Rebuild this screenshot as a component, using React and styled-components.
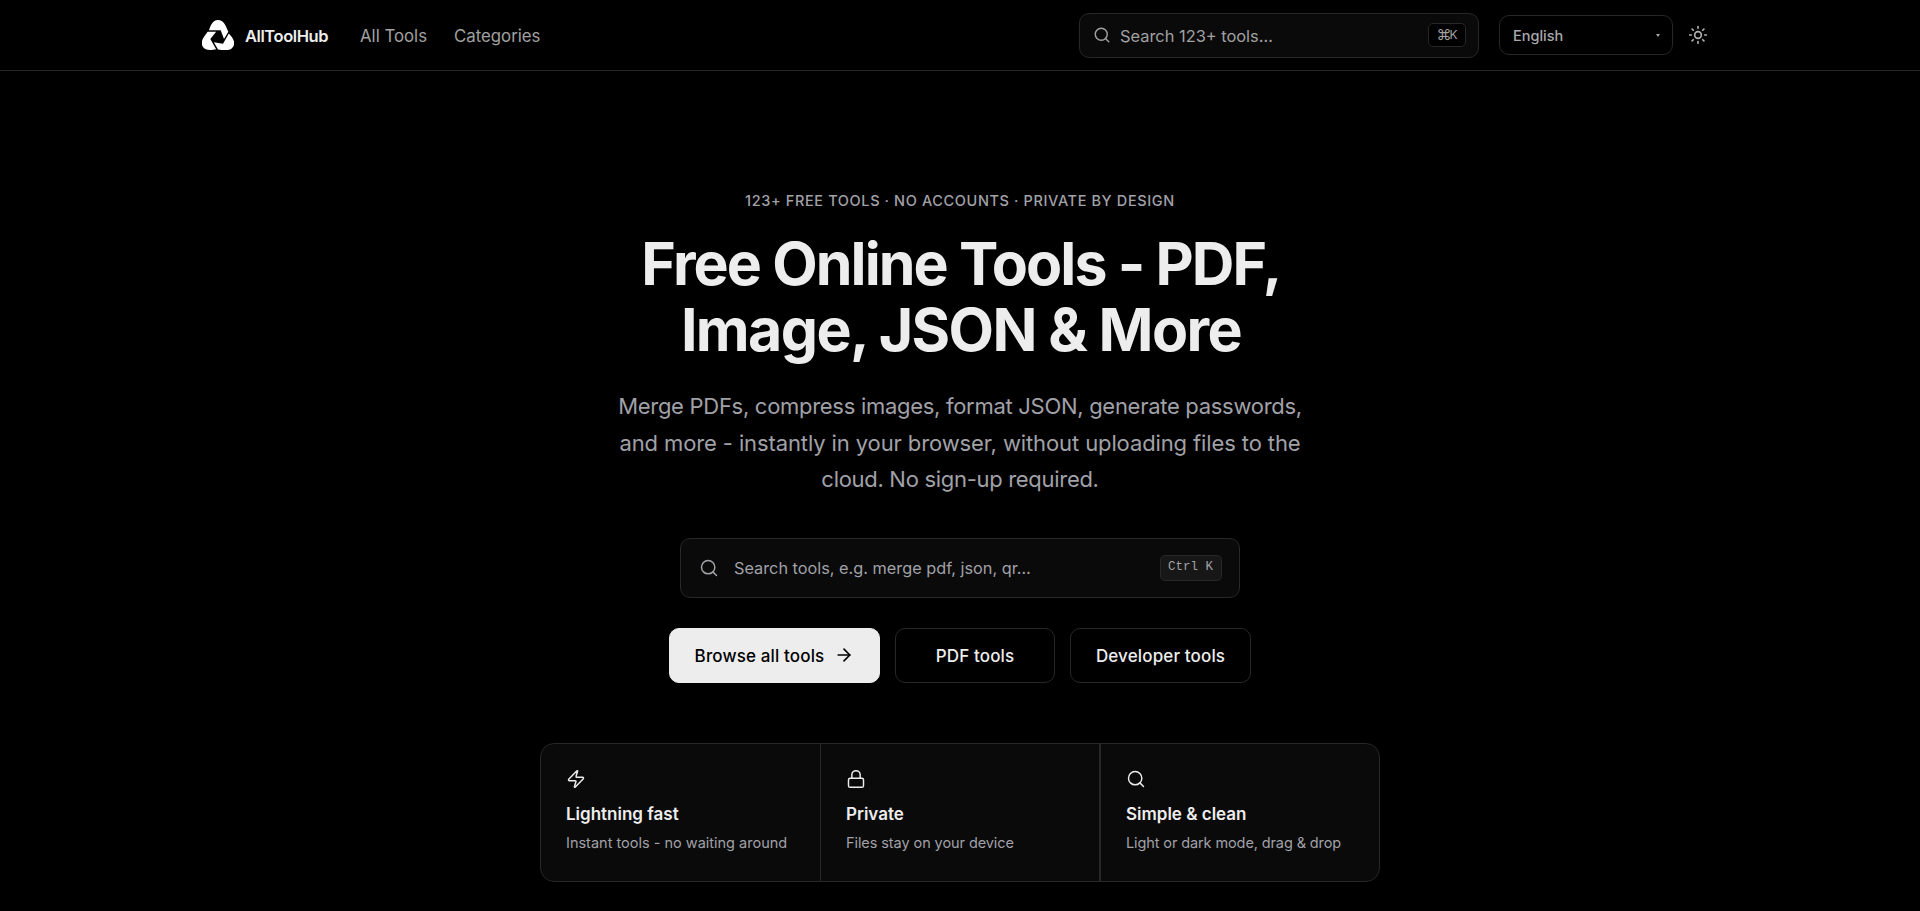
import React from 'react'
import styled, { createGlobalStyle } from 'styled-components'
import { ArrowRight, Lock, Search, Sun, Zap } from 'lucide-react'

const features = [
  {
    icon: Zap,
    title: 'Lightning fast',
    text: 'Instant tools - no waiting around',
  },
  {
    icon: Lock,
    title: 'Private',
    text: 'Files stay on your device',
    spacing: '-0.08px',
  },
  {
    icon: Search,
    title: 'Simple & clean',
    text: 'Light or dark mode, drag & drop',
    spacing: '-0.11px',
  },
]

const blade =
  'M-27 -22 C-23 -34 -17 -53 0 -53 C17 -53 23 -36 31 -18 L18 4 L8 -22 Z'

const Logo = () => (
  <LogoMark viewBox='-48 -53 96 90'>
    <path d={blade} />
    <path d={blade} transform='rotate(120)' />
    <path d={blade} transform='rotate(240)' />
  </LogoMark>
)

const Header = () => (
  <Bar>
    <Brand>
      <Logo />
      <BrandName>AllToolHub</BrandName>
    </Brand>
    <Nav>
      <NavLink>All Tools</NavLink>
      <NavLink>Categories</NavLink>
    </Nav>
    <HeaderSearch>
      <Search size={18} strokeWidth={1.9} />
      <HeaderSearchText>Search 123+ tools…</HeaderSearchText>
      <Shortcut>
        <span>⌘</span>K
      </Shortcut>
    </HeaderSearch>
    <Language>
      English
      <Caret />
    </Language>
    <ThemeButton aria-label='Toggle theme'>
      <Sun size={20} strokeWidth={2} />
    </ThemeButton>
  </Bar>
)

const App = () => {
  return (
    <>
      <GlobalStyle />
      <Header />
      <Hero>
        <Eyebrow>123+ Free tools · No accounts · Private by design</Eyebrow>
        <Title>
          <Line $spacing='-1.9px'>Free Online Tools - PDF,</Line>
          <Line $spacing='-1.6px'>Image, JSON &amp; More</Line>
        </Title>
        <Lead>
          <Line $spacing='-0.29px'>
            Merge PDFs, compress images, format JSON, generate passwords,
          </Line>
          <Line $spacing='-0.11px'>
            and more - instantly in your browser, without uploading files to the
          </Line>
          <Line $spacing='-0.3px'>cloud. No sign-up required.</Line>
        </Lead>
        <HeroSearch>
          <Search size={20} strokeWidth={1.8} />
          <HeroSearchText>Search tools, e.g. merge pdf, json, qr…</HeroSearchText>
          <KeyHint>Ctrl K</KeyHint>
        </HeroSearch>
        <Actions>
          <Button $primary $width='211px'>
            Browse all tools
            <ArrowRight size={20} strokeWidth={2} />
          </Button>
          <Button $width='160px'>PDF tools</Button>
          <Button $width='181px'>Developer tools</Button>
        </Actions>
        <Features>
          {features.map(({ icon: Icon, title, text, spacing }) => (
            <Feature key={title}>
              <Icon size={20} strokeWidth={1.75} />
              <FeatureTitle>{title}</FeatureTitle>
              <FeatureText $spacing={spacing}>{text}</FeatureText>
            </Feature>
          ))}
        </Features>
      </Hero>
    </>
  )
}

export default App

const GlobalStyle = createGlobalStyle`
  * {
    box-sizing: border-box;
  }

  body {
    margin: 0;
    height: 911px;
    overflow: hidden;
    background: #000;
    color: #ededed;
    font-family: Inter, 'Liberation Sans', sans-serif;
  }

  h1, h2, p {
    margin: 0;
  }

  svg {
    flex-shrink: 0;
  }
`

const Bar = styled.header`
  display: flex;
  align-items: center;
  height: 71px;
  padding: 0 204px 0 202px;
  border-bottom: 1px solid #272727;
`

const Brand = styled.a`
  display: flex;
  align-items: center;
  gap: 11px;
  width: 158px;
`

const LogoMark = styled.svg`
  width: 32px;
  height: 30px;
  fill: #fff;
`

const BrandName = styled.span`
  padding-top: 1px;
  font-size: 16.5px;
  font-weight: 600;
  letter-spacing: -0.43px;
`

const Nav = styled.nav`
  display: flex;
  gap: 27px;
  padding-top: 1px;
`

const NavLink = styled.a`
  font-size: 16.8px;
  color: #a1a1a1;
`

const HeaderSearch = styled.div`
  display: flex;
  align-items: center;
  width: 400px;
  height: 45px;
  margin-left: auto;
  padding: 0 12px 0 13px;
  gap: 9px;
  border: 1px solid #272727;
  border-radius: 10px;
  background: #0a0a0a;
  color: #a1a1a1;
`

const HeaderSearchText = styled.span`
  flex: 1;
  padding-top: 1px;
  font-size: 16.4px;
`

const Shortcut = styled.kbd`
  display: flex;
  align-items: center;
  justify-content: center;
  width: 38px;
  height: 24px;
  padding-bottom: 1px;
  border: 1px solid #272727;
  border-radius: 5px;
  background: #000;
  font-family: Inter, 'DejaVu Sans', sans-serif;
  font-size: 12px;

  span {
    margin-right: -2px;
    font-size: 15px;
  }
`

const Language = styled.div`
  display: flex;
  align-items: center;
  justify-content: space-between;
  width: 174px;
  height: 40px;
  margin-left: 20px;
  padding: 0 12px 0 13px;
  border: 1px solid #272727;
  border-radius: 10px;
  color: #a9a9ad;
  font-size: 14.5px;
  font-weight: 500;
`

const Caret = styled.span`
  border: 2.5px solid transparent;
  border-top: 3px solid #a9a9ad;
  border-bottom: 0;
`

const ThemeButton = styled.button`
  display: flex;
  align-items: center;
  justify-content: center;
  width: 36px;
  height: 36px;
  margin-left: 7px;
  padding: 0;
  border: none;
  background: none;
  color: #b0b0b0;
`

const Hero = styled.main`
  display: flex;
  flex-direction: column;
  align-items: center;
  padding-top: 120px;
`

const Eyebrow = styled.p`
  font-size: 14.5px;
  font-weight: 500;
  line-height: 20px;
  letter-spacing: 0.62px;
  text-transform: uppercase;
  color: #a1a1a8;
`

const Title = styled.h1`
  margin-top: 20px;
  padding-left: 2px;
  font-size: 59px;
  font-weight: 700;
  line-height: 66px;
  text-align: center;
`

const Line = styled.span`
  display: block;
  white-space: nowrap;
  letter-spacing: ${({ $spacing }) => $spacing};
`

const Lead = styled.p`
  margin-top: 25px;
  font-size: 22px;
  line-height: 36.5px;
  text-align: center;
  color: #a1a1a8;
`

const HeroSearch = styled.div`
  display: flex;
  align-items: center;
  width: 560px;
  height: 60px;
  margin-top: 40px;
  padding: 0 17px 0 18px;
  gap: 15px;
  border: 1px solid #272727;
  border-radius: 10px;
  background: #0a0a0a;
  color: #a1a1a8;
`

const HeroSearchText = styled.span`
  flex: 1;
  font-size: 16.3px;
`

const KeyHint = styled.kbd`
  display: flex;
  align-items: center;
  justify-content: center;
  width: 62px;
  height: 26px;
  padding: 0 1px 2px 0;
  border: 1px solid #272727;
  border-radius: 5px;
  background: #171717;
  font-family: 'Liberation Mono', monospace;
  font-size: 12.5px;
`

const Actions = styled.div`
  display: flex;
  gap: 15px;
  margin-top: 30px;
`

const Button = styled.button`
  display: flex;
  align-items: center;
  justify-content: center;
  gap: 10px;
  width: ${({ $width }) => $width};
  height: 55px;
  padding: 1px 0 0;
  border: 1px solid ${({ $primary }) => ($primary ? '#ededed' : '#272727')};
  border-radius: 10px;
  background: ${({ $primary }) => ($primary ? '#ededed' : '#000')};
  color: ${({ $primary }) => ($primary ? '#000' : '#ededed')};
  font-family: inherit;
  font-size: 17px;
  font-weight: 500;
  letter-spacing: 0.14px;

  svg {
    margin-bottom: 2px;
  }
`

const Features = styled.section`
  display: grid;
  grid-template-columns: 279px 279px 280px;
  width: 840px;
  height: 139px;
  margin-top: 60px;
  border: 1px solid #272727;
  border-radius: 14px;
  background: #0a0a0a;
`

const Feature = styled.div`
  padding: 25px 0 0 25px;

  & + & {
    border-left: 1px solid #272727;
  }

  &:last-child {
    border-left-width: 2px;
  }
`

const FeatureTitle = styled.h2`
  margin-top: 9px;
  font-size: 17px;
  font-weight: 600;
  line-height: 24px;
`

const FeatureText = styled.p`
  margin-top: 6px;
  font-size: 14.5px;
  line-height: 22px;
  letter-spacing: ${({ $spacing }) => $spacing || 'normal'};
  color: #a1a1a8;
`
